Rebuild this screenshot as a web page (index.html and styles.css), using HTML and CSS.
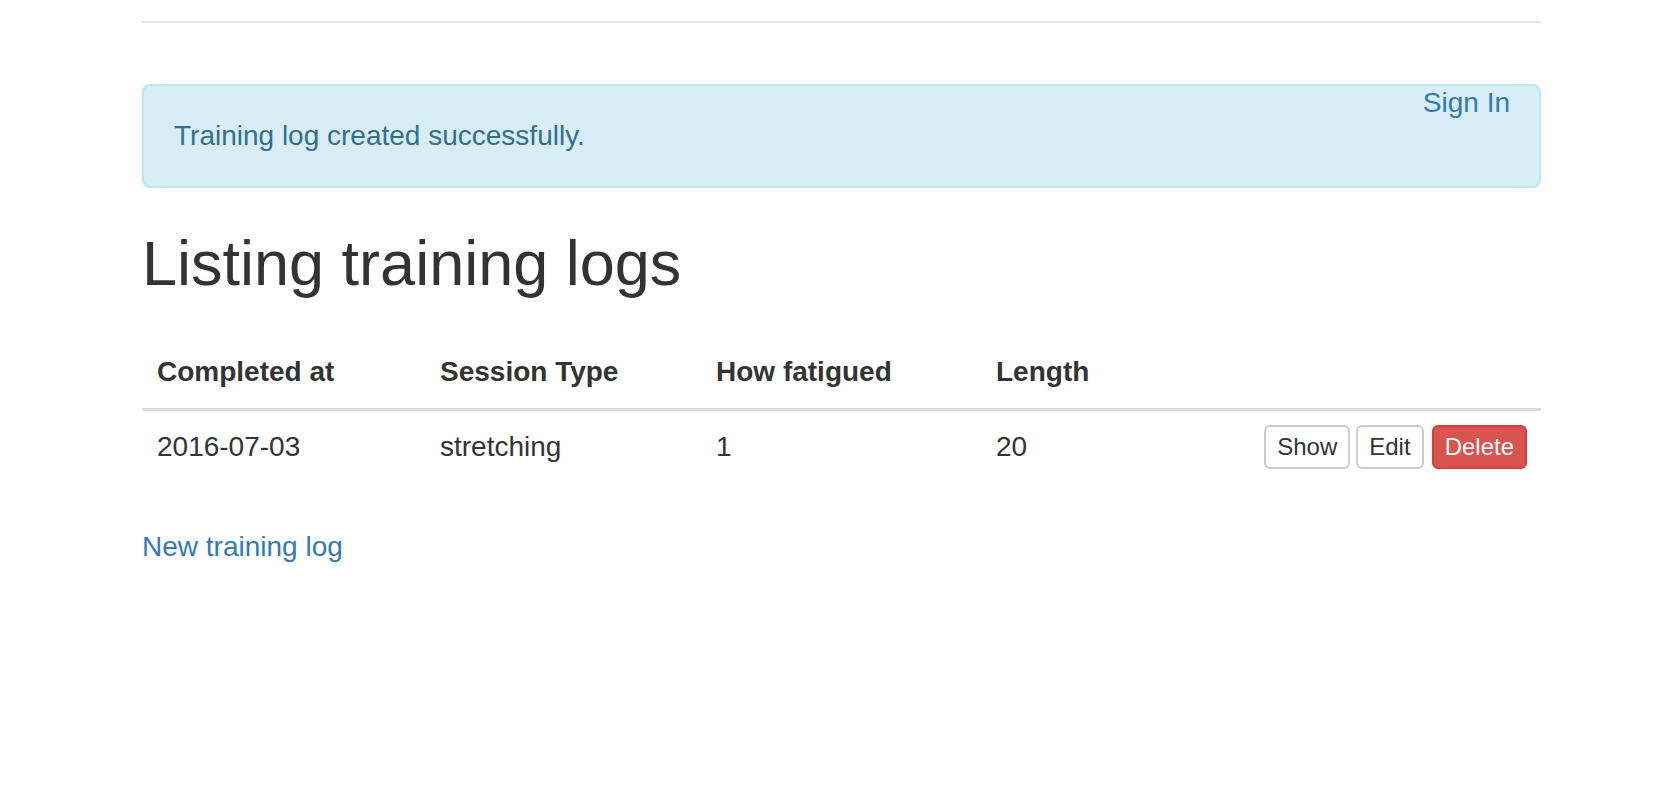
FILE: index.html
```html
<!DOCTYPE html>
<html lang="en">
<head>
<meta charset="utf-8">
<title>Training logs</title>
<link rel="stylesheet" href="styles.css">
</head>
<body>
<div class="page">
  <div class="topbar"></div>
  <div class="content">
    <div class="alert">
      <span class="alert-text">Training log created successfully.</span>
      <a class="signin" href="#">Sign In</a>
    </div>
    <h1 class="title">Listing training logs</h1>
    <table class="logs">
      <thead>
        <tr>
          <th class="c1">Completed at</th>
          <th class="c2">Session Type</th>
          <th class="c3">How fatigued</th>
          <th class="c4">Length</th>
          <th class="c5"></th>
        </tr>
      </thead>
      <tbody>
        <tr>
          <td>2016-07-03</td>
          <td>stretching</td>
          <td>1</td>
          <td>20</td>
          <td class="actions">
            <div class="btns">
              <a class="btn" href="#">Show</a>
              <a class="btn" href="#">Edit</a>
              <a class="btn btn-danger" href="#">Delete</a>
            </div>
          </td>
        </tr>
      </tbody>
    </table>
    <a class="newlink" href="#">New training log</a>
  </div>
</div>
</body>
</html>
```
FILE: styles.css
```css
html, body {
  margin: 0;
  padding: 0;
  background: #fff;
}
body {
  font-family: "Liberation Sans", Arial, Helvetica, sans-serif;
  color: #333;
  font-size: 28px;
  line-height: 40px;
}
.page {
  margin-left: 142px;
  width: 1399px;
}
.topbar {
  height: 21px;
  border-bottom: 2px solid #e5e5e5;
}
.content {
  position: relative;
  padding-top: 61px;
}
.alert {
  position: relative;
  background: #d9edf7;
  border: 2px solid #bce8f1;
  border-radius: 8px;
  color: #31708f;
  padding: 30px;
  margin-bottom: 40px;
}
.alert-text {
  display: block;
}
.signin {
  position: absolute;
  top: -3px;
  right: 29px;
  color: #337ab7;
  text-decoration: none;
}
.title {
  font-size: 63px;
  font-weight: 500;
  line-height: 70px;
  margin: 2px 0 38px 0;
  color: #333;
}
.logs {
  width: 100%;
  border-collapse: separate;
  border-spacing: 0;
  margin-bottom: 44px;
}
.logs th {
  text-align: left;
  font-weight: bold;
  padding: 16px 16px 16px 15px;
  border-bottom: 3px solid #ddd;
}
.logs td {
  padding: 16px 16px 16px 15px;
  vertical-align: middle;
}
.c1 { width: 252px; }
.c2 { width: 245px; }
.c3 { width: 249px; }
.c4 { width: 150px; }
.logs td.actions {
  padding: 14px 14px 14px 16px;
}
.btns {
  display: flex;
  justify-content: flex-end;
  align-items: center;
  gap: 6px;
}
.btn {
  display: inline-block;
  font-size: 24px;
  line-height: 36px;
  padding: 2px 11px;
  border: 2px solid #ccc;
  border-radius: 6px;
  color: #333;
  background: #fff;
  text-decoration: none;
}
.btn-danger {
  background: #d9534f;
  border-color: #d43f3a;
  color: #fff;
  margin-left: 2px;
}
.newlink {
  color: #337ab7;
  text-decoration: none;
}
```
